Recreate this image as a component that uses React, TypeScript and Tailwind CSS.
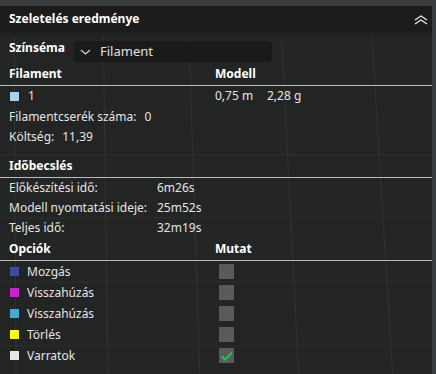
import React from 'react';

const font = { fontFamily: '"Noto Sans", "Open Sans", sans-serif' };

const options = [
  { label: 'Mozgás', color: 'bg-[#3b4ba3]', on: false },
  { label: 'Visszahúzás', color: 'bg-[#d21fd6]', on: false },
  { label: 'Visszahúzás', color: 'bg-[#46a9d2]', on: false },
  { label: 'Törlés', color: 'bg-[#ffff00]', on: false },
  { label: 'Varratok', color: 'bg-[#e6e6e6]', on: true },
];

const times = [
  ['Előkészítési idő:', '6m26s'],
  ['Modell nyomtatási ideje:', '25m52s'],
  ['Teljes idő:', '32m19s'],
];

const GridLines = () => (
  <svg className="absolute inset-0 pointer-events-none" width="432" height="374" viewBox="0 0 432 374">
    <g stroke="#2e3131" strokeWidth="1.2" fill="none">
      <line x1="14" y1="0" x2="16" y2="374" />
      <line x1="103" y1="0" x2="108" y2="374" />
      <line x1="188" y1="0" x2="200" y2="374" />
      <line x1="280" y1="0" x2="299" y2="374" />
      <line x1="370" y1="0" x2="393" y2="374" />
      <line x1="0" y1="149" x2="432" y2="149" />
      <line x1="0" y1="212" x2="432" y2="212" />
      <line x1="0" y1="276" x2="432" y2="276" />
      <line x1="0" y1="340" x2="432" y2="340" />
    </g>
  </svg>
);

const Divider = () => <div className="h-px bg-[#bcbcbc]" />;

export default function App() {
  return (
    <div className="w-[436px] h-[374px] bg-[#393d3f] flex flex-col overflow-hidden text-[12px] text-[#e4e4e4] whitespace-nowrap" style={font}>
      <div className="h-[6px] shrink-0" />
      <div className="flex flex-1">
        <div className="relative w-[432px] bg-[#232525]">
          <GridLines />
          <div className="relative">
            <div className="h-[26px] bg-[#1c1c1c] flex items-center justify-between pl-[9px] pr-[4px]">
              <span className="font-bold text-white">Szeletelés eredménye</span>
              <svg width="14" height="10" viewBox="0 0 14 10" className="mt-[2px]">
                <g stroke="#e8e8e8" strokeWidth="1.3" fill="none" strokeLinejoin="miter">
                  <polyline points="1,5 7,1 13,5" />
                  <polyline points="1,9 7,5 13,9" />
                </g>
              </svg>
            </div>
            <div className="h-[4px] bg-[#1f2121]" />

            <div className="h-[28px] flex items-start pl-[9px] pt-[5px]">
              <span className="font-bold text-white leading-[20px] -mt-[3px] w-[65px]">Színséma</span>
              <div className="w-[198px] h-[21px] rounded-[4px] bg-[#1a1a1a] flex items-center pl-[6px]">
                <svg width="11" height="6" viewBox="0 0 11 6">
                  <polyline points="1,1 5.5,5 10,1" stroke="#d8d8d8" strokeWidth="1.2" fill="none" />
                </svg>
                <span className="ml-[9px] text-[#e0e0e0] text-[13px]">Filament</span>
              </div>
            </div>

            <div className="h-[21px] grid grid-cols-[206px_1fr] pl-[9px] font-bold text-white leading-[20px]">
              <span>Filament</span>
              <span>Modell</span>
            </div>
            <Divider />
            <div className="h-[20px] grid grid-cols-[206px_1fr] pl-[9px] items-center">
              <div className="flex items-center">
                <span className="w-[9px] h-[9px] bg-[#a3d4f0] ml-[1px]" />
                <span className="ml-[9px]">1</span>
              </div>
              <div className="flex">
                <span className="w-[52px]">0,75 m</span>
                <span>2,28 g</span>
              </div>
            </div>
            <div className="h-[21px] flex items-center pl-[9px]">
              <span>Filamentcserék száma:</span>
              <span className="ml-[8px]">0</span>
            </div>
            <div className="h-[20px] flex items-center pl-[9px]">
              <span>Költség:</span>
              <span className="ml-[8px]">11,39</span>
            </div>

            <div className="h-[8px]" />
            <div className="h-[22px] flex items-center pl-[9px] font-bold text-white">Időbecslés</div>
            <Divider />
            {times.map(([k, v], i) => (
              <div key={i} className="h-[20px] grid grid-cols-[148px_1fr] pl-[9px] items-center">
                <span>{k}</span>
                <span>{v}</span>
              </div>
            ))}

            <div className="h-[22px] grid grid-cols-[206px_1fr] pl-[9px] items-center font-bold text-white">
              <span>Opciók</span>
              <span>Mutat</span>
            </div>
            <Divider />
            {options.map((o, i) => (
              <div key={i} className="h-[21px] grid grid-cols-[206px_1fr] pl-[9px] items-center">
                <div className="flex items-center">
                  <span className={`w-[9px] h-[9px] ml-[1px] ${o.color}`} />
                  <span className="ml-[8px]">{o.label}</span>
                </div>
                <div className="pl-[4px]">
                  <div className="w-[15px] h-[15px] bg-[#5a5a5a] flex items-center justify-center">
                    {o.on && (
                      <svg width="13" height="10" viewBox="0 0 13 10">
                        <polyline points="1.5,5 5,8.5 12,1.5" stroke="#1fc34a" strokeWidth="2.2" fill="none" />
                      </svg>
                    )}
                  </div>
                </div>
              </div>
            ))}
          </div>
        </div>
        <div className="flex-1" />
      </div>
    </div>
  );
}
